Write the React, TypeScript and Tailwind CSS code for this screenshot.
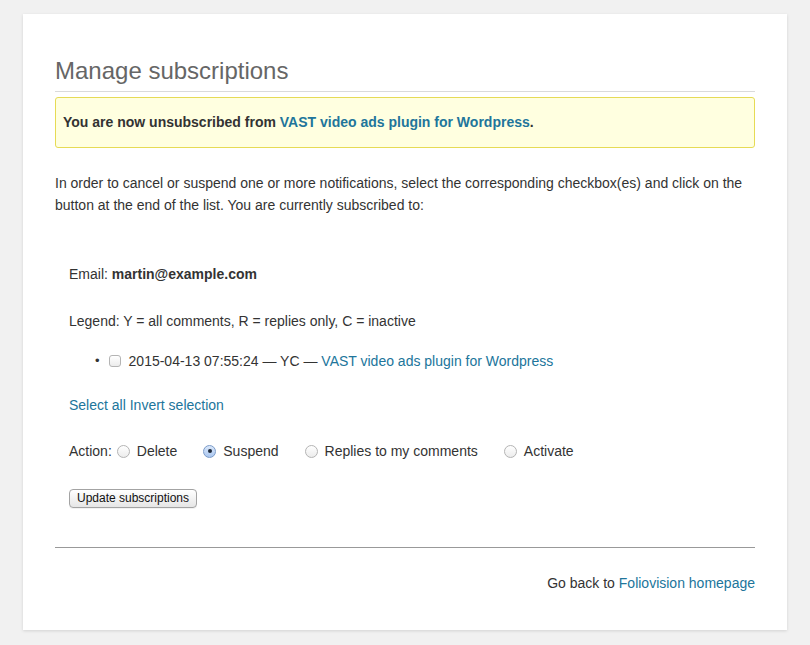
function Checkbox() {
  return (
    <span className="inline-block w-[12px] h-[12px] rounded-[3px] border border-[#b4b4b4] bg-gradient-to-b from-white to-[#ececec] align-[-1px]" />
  );
}

function Radio({ checked }: { checked?: boolean }) {
  return (
    <span
      className={
        checked
          ? "inline-flex items-center justify-center w-[13px] h-[13px] rounded-full border border-[#7b9bc9] bg-gradient-to-b from-[#dbe8fa] to-[#a9c6ef] align-[-2px]"
          : "inline-flex items-center justify-center w-[13px] h-[13px] rounded-full border border-[#b4b4b4] bg-gradient-to-b from-white to-[#ececec] align-[-2px]"
      }
    >
      {checked && <span className="w-[4px] h-[4px] rounded-full bg-[#1e2a3a]" />}
    </span>
  );
}

export default function App() {
  const actions = [
    { label: "Delete", checked: false },
    { label: "Suspend", checked: true },
    { label: "Replies to my comments", checked: false },
    { label: "Activate", checked: false },
  ];

  return (
    <div className="min-h-[645px] bg-[#f1f1f1] pt-[14px] px-[23px] pb-[15px] font-['Liberation_Sans',Arial,sans-serif] text-[14px] text-[#333]">
      <div className="bg-white shadow-[0_1px_3px_rgba(0,0,0,0.13)] px-[32px] pt-[41px] pb-[36px]">
        <h1 className="text-[24px] leading-[31px] text-[#666] pb-[5px] border-b border-[#dadada]">
          Manage subscriptions
        </h1>

        <div className="mt-[5px] bg-[#ffffe0] border border-[#e6db55] rounded-[3px] px-[7px] py-[14px] leading-[21px] font-bold">
          You are now unsubscribed from{" "}
          <a className="text-[#21759b]">VAST video ads plugin for Wordpress</a>.
        </div>

        <p className="mt-[24px] leading-[22px]">
          In order to cancel or suspend one or more notifications, select the corresponding checkbox(es) and click on
          the button at the end of the list. You are currently subscribed to:
        </p>

        <div className="pl-[14px] leading-[22px]">
          <p className="mt-[47px]">
            Email: <strong>martin@example.com</strong>
          </p>
          <p className="mt-[25px]">Legend: Y = all comments, R = replies only, C = inactive</p>

          <ul className="mt-[18px] pl-[26px]">
            <li className="flex items-center">
              <span className="text-[13px] mr-[9px]">•</span>
              <Checkbox />
              <span className="ml-[8px]">
                2015-04-13 07:55:24 — YC — <a className="text-[#21759b]">VAST video ads plugin for Wordpress</a>
              </span>
            </li>
          </ul>

          <p className="mt-[22px] text-[#21759b]">
            <a>Select all</a> <a>Invert selection</a>
          </p>

          <div className="mt-[24px] flex items-center">
            <span className="mr-[5px]">Action:</span>
            {actions.map((a) => (
              <label key={a.label} className="flex items-center mr-[26px]">
                <Radio checked={a.checked} />
                <span className="ml-[7px]">{a.label}</span>
              </label>
            ))}
          </div>

          <button className="mt-[27px] h-[19px] w-[128px] rounded-[4px] border border-[#a3a3a3] bg-gradient-to-b from-white to-[#e6e6e6] text-[12px] leading-[17px] text-[#111] shadow-[0_1px_0_rgba(0,0,0,0.05)]">
            Update subscriptions
          </button>
        </div>

        <hr className="mt-[39px] border-0 border-t border-[#999]" />

        <p className="mt-[24px] leading-[22px] text-right">
          Go back to <a className="text-[#21759b]">Foliovision homepage</a>
        </p>
      </div>
    </div>
  );
}
